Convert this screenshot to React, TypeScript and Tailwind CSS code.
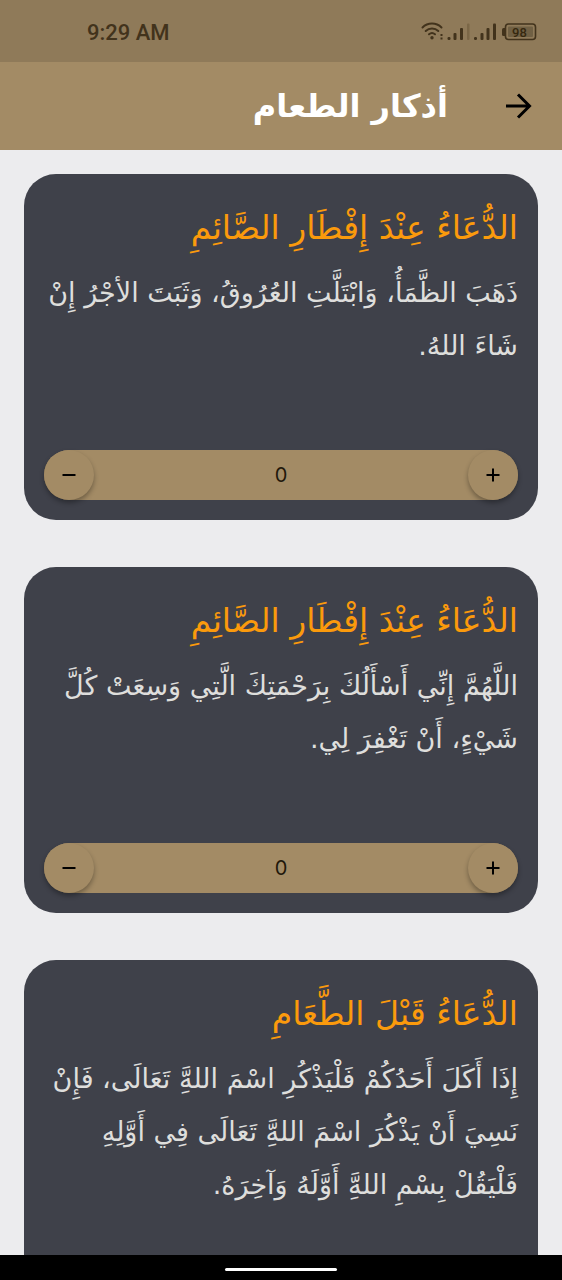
import { useState } from "react";

type Dhikr = { title: string; lines: string[] };

const adhkar: Dhikr[] = [
  {
    title: "الدُّعَاءُ عِنْدَ إِفْطَارِ الصَّائِمِ",
    lines: ["ذَهَبَ الظَّمَأُ، وَابْتَلَّتِ العُرُوقُ، وَثَبَتَ الأجْرُ إِنْ", "شَاءَ اللهُ."],
  },
  {
    title: "الدُّعَاءُ عِنْدَ إِفْطَارِ الصَّائِمِ",
    lines: ["اللَّهُمَّ إِنِّي أَسْأَلُكَ بِرَحْمَتِكَ الَّتِي وَسِعَتْ كُلَّ", "شَيْءٍ، أَنْ تَغْفِرَ لِي."],
  },
  {
    title: "الدُّعَاءُ قَبْلَ الطَّعَامِ",
    lines: [
      "إِذَا أَكَلَ أَحَدُكُمْ فَلْيَذْكُرِ اسْمَ اللهَِّ تَعَالَى، فَإِنْ",
      "نَسِيَ أَنْ يَذْكُرَ اسْمَ اللهَِّ تَعَالَى فِي أَوَّلِهِ",
      "فَلْيَقُلْ بِسْمِ اللهَِّ أَوَّلَهُ وَآخِرَهُ.",
    ],
  },
];

function StatusIcons() {
  return (
    <svg className="h-6 w-[118px]" viewBox="0 2 118 24" fill="none" aria-hidden="true">
      <g stroke="#42331c" strokeWidth="2" strokeLinecap="round">
        <path d="M2.5 8.5a13.5 13.5 0 0 1 19 0" />
        <path d="M5.7 12a9 9 0 0 1 12.6 0" />
        <path d="M9 15.300a4.6 4.6 0 0 1 6 0" />
      </g>
      <g fill="#42331c">
        <circle cx="12" cy="18.700" r="1.7" />
        <rect x="20.500" y="15" width="2" height="2" />
        <rect x="20.500" y="18.500" width="2" height="2" />
        <rect x="27.500" y="18" width="3" height="3" rx="1.200" />
        <rect x="33.500" y="14" width="3" height="7" rx="1" />
        <rect x="40" y="9" width="3" height="12" rx="1" />
        <rect x="54" y="18" width="3" height="3" rx="1.200" />
        <rect x="60.500" y="14" width="3" height="7" rx="1" />
        <rect x="66.500" y="9" width="3" height="12" rx="1" />
        <rect x="73" y="4.500" width="3" height="16.500" rx="1" />
        <path d="M85 9h-1.500a1.500 1.500 0 0 0-1.500 1.500v5a1.500 1.500 0 0 0 1.500 1.500H85z" />
      </g>
      <rect x="47" y="4.500" width="2.500" height="16.500" rx="1" fill="#7b6747" />
      <rect x="85.500" y="5" width="30" height="15.500" rx="3" stroke="#42331c" strokeWidth="1.600" />
      <rect x="88" y="7.500" width="25" height="10.500" rx="1" fill="#706044" />
      <text x="99.500" y="17.500" textAnchor="middle" fontSize="13" fontWeight="500" fontFamily="Roboto, sans-serif" fill="#36280f">
        98
      </text>
    </svg>
  );
}

const roundButton =
  "flex size-[50px] items-center justify-center rounded-full bg-[#a38b65] text-black shadow-[0_3px_5px_rgba(0,0,0,0.32)]";

function Counter() {
  const [count, setCount] = useState(0);
  return (
    <div className="flex items-center justify-between rounded-full bg-[#a38b65]">
      <button type="button" aria-label="زيادة" className={roundButton} onClick={() => setCount(count + 1)}>
        <svg className="size-4" viewBox="0 0 16 16" stroke="currentColor" strokeWidth="2" aria-hidden="true">
          <path d="M1.500 8h13M8 1.500v13" />
        </svg>
      </button>
      <output className="font-[Inter,sans-serif] text-[20px] leading-7 text-[#21180b]">{count}</output>
      <button
        type="button"
        aria-label="إنقاص"
        className={roundButton}
        onClick={() => setCount(Math.max(0, count - 1))}
      >
        <svg className="size-4" viewBox="0 0 16 16" stroke="currentColor" strokeWidth="2" aria-hidden="true">
          <path d="M1.500 8h13" />
        </svg>
      </button>
    </div>
  );
}

function DhikrCard({ title, lines }: Dhikr) {
  return (
    <article className="flex shrink-0 flex-col rounded-[32px] bg-[#3f414a] p-5">
      <h2 className="text-[33px] leading-[68px] whitespace-nowrap text-[#fb9a0c]">{title}</h2>
      <p className="mt-1 mb-[78px] text-[27px] leading-[53px] text-[#dededc]">
        {lines.map((line) => (
          <span key={line} className="block whitespace-nowrap">
            {line}
          </span>
        ))}
      </p>
      <Counter />
    </article>
  );
}

export default function App() {
  return (
    <div
      dir="rtl"
      lang="ar"
      className="flex h-screen flex-col overflow-hidden bg-[#ececee] font-['DejaVu_Sans',sans-serif]"
    >
      <div
        dir="ltr"
        className="flex h-[62px] shrink-0 items-center justify-between bg-[#8f7a59] pt-1 pr-6 pl-[87px] font-[Roboto,sans-serif]"
      >
        <time className="text-[22px] leading-6 font-medium text-[#42331c]">9:29 AM</time>
        <StatusIcons />
      </div>
      <header className="flex h-[88px] shrink-0 items-center gap-14 bg-[#a38b65] px-[30px]">
        <button type="button" aria-label="رجوع" className="text-black">
          <svg className="size-7" viewBox="0 0 28 28" fill="none" stroke="currentColor" strokeWidth="3" aria-hidden="true">
            <path d="M2 14h23M14 2.500 25.500 14 14 25.500" />
          </svg>
        </button>
        <h1 className="text-[32px] leading-[48px] font-bold whitespace-nowrap text-white">أذكار الطعام</h1>
      </header>
      <main className="flex min-h-0 flex-1 flex-col gap-[47px] overflow-y-auto px-6 pt-6 pb-6 [scrollbar-width:none]">
        {adhkar.map((dhikr, index) => (
          <DhikrCard key={index} {...dhikr} />
        ))}
      </main>
      <footer className="flex h-[25px] shrink-0 items-center justify-center bg-black">
        <div className="mt-1 h-[3px] w-28 rounded-full bg-white" />
      </footer>
    </div>
  );
}
